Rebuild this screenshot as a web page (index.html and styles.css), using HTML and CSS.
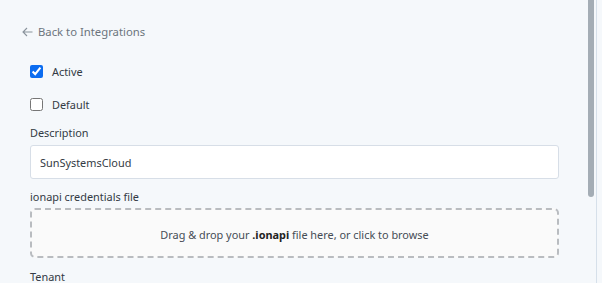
FILE: index.html
```html
<!DOCTYPE html>
<html>
<head>
<meta charset="utf-8">
<link rel="stylesheet" href="styles.css">
</head>
<body>
<div class="page">
  <a class="back" href="#"><svg class="arrow" width="11" height="10" viewBox="0 0 11 10"><path d="M10.5 5H1M5 1L1 5l4 4" fill="none" stroke="#8a939c" stroke-width="1.1"/></svg>Back to Integrations</a>
  <form class="form">
    <label class="check"><input type="checkbox" checked> <span>Active</span></label>
    <label class="check last"><input type="checkbox"> <span>Default</span></label>
    <div class="field">
      <label class="lbl">Description</label>
      <input class="input" type="text" value="SunSystemsCloud">
    </div>
    <div class="field">
      <label class="lbl lbl-tight">ionapi credentials file</label>
      <div class="drop">Drag &amp; drop your&nbsp;<b>.ionapi</b>&nbsp;file here, or click to browse</div>
    </div>
    <div class="field">
      <label class="lbl">Tenant</label>
    </div>
  </form>
</div>
<div class="scrollbar"><div class="thumb"></div></div>
</body>
</html>
```
FILE: styles.css
```css
html, body {
  margin: 0;
  padding: 0;
  height: 100%;
  overflow: hidden;
}
body {
  background: #f5f8fb;
  font-family: "Noto Sans", "Open Sans", sans-serif;
  font-size: 10.9px;
  color: #333a44;
}
.page {
  padding: 22px 43px 0 22px;
}
.back {
  display: inline-flex;
  align-items: center;
  gap: 5px;
  color: #6c757d;
  text-decoration: none;
  font-size: 11.3px;
  line-height: 20px;
}
.form {
  padding: 19px 0 0 8px;
  display: flex;
  flex-direction: column;
}
.check {
  display: flex;
  align-items: center;
  gap: 9px;
  height: 20px;
  margin-bottom: 13px;
  color: #333a44;
}
.check.last {
  margin-bottom: 9px;
}
.check input {
  margin: 0;
  width: 13px;
  height: 13px;
  accent-color: #0b6cf0;
}
.field {
  display: flex;
  flex-direction: column;
}
.lbl {
  line-height: 20px;
  margin-bottom: 2px;
}
.lbl-tight {
  margin-bottom: 1px;
}
.input {
  box-sizing: border-box;
  height: 34px;
  width: 529px;
  border: 1px solid #d7dee7;
  border-radius: 3px;
  background: #fff;
  padding: 0 9px;
  font: inherit;
  color: #333a44;
  margin-bottom: 8px;
}
.drop {
  box-sizing: border-box;
  width: 529px;
  height: 50px;
  border: 2px dashed #b9bcc0;
  border-radius: 5px;
  background: #fafafa;
  display: flex;
  align-items: center;
  justify-content: center;
  color: #454c55;
  padding-top: 3px;
  margin-bottom: 9px;
}
.drop b {
  color: #222;
}
.scrollbar {
  position: fixed;
  top: 0;
  right: 5px;
  width: 10px;
  height: 100%;
  border-right: 1px solid #d6e0ea;
}
.thumb {
  margin-left: 2px;
  width: 6px;
  height: 197px;
  background: #a4adb5;
  border-radius: 0 0 3px 3px;
}
```
